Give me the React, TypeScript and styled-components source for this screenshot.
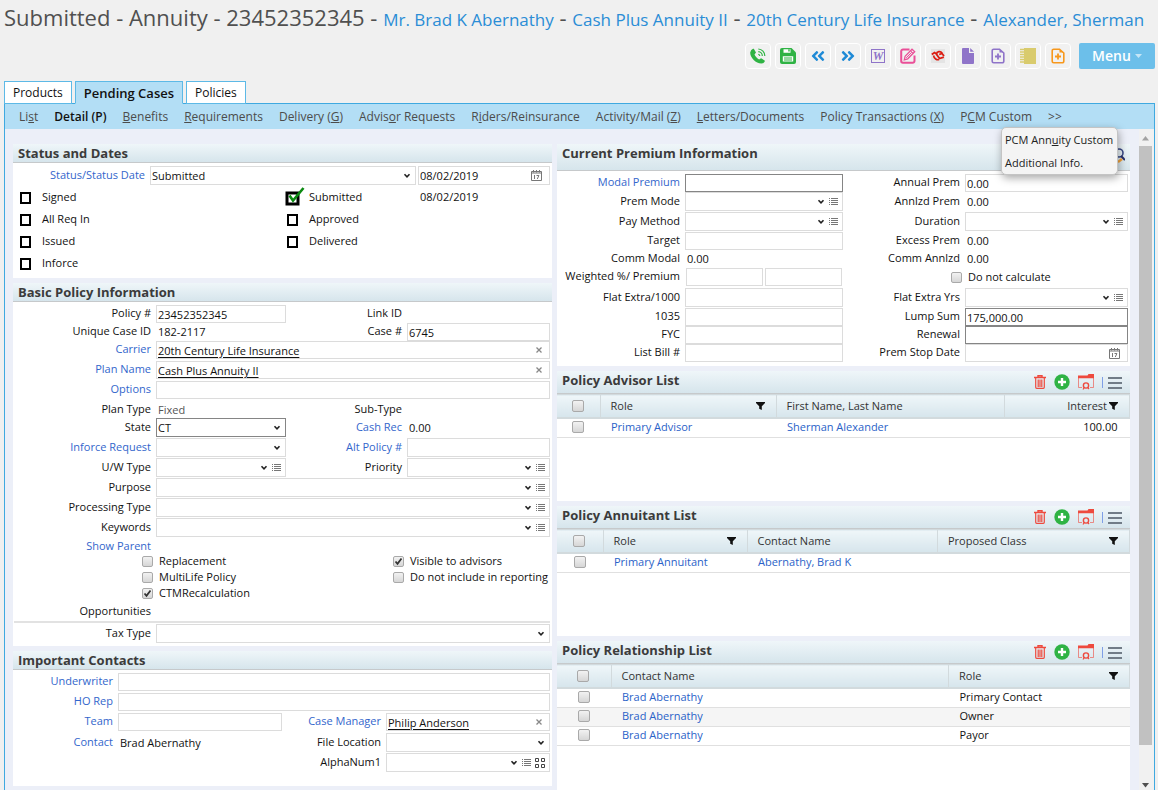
import React, { useId } from "react";
import styled, { createGlobalStyle, css } from "styled-components";
import { FaAngleDoubleLeft, FaAngleDoubleRight } from "react-icons/fa";

const GlobalStyle = createGlobalStyle`
  * { box-sizing: border-box; }
  body {
    margin: 0;
    background: #f0f0f0;
    color: #111;
    font: 11px/16px "Open Sans", "Liberation Sans", sans-serif;
    overflow: hidden;
  }
  input, select, button { font: inherit; color: inherit; margin: 0; }
  a { color: inherit; text-decoration: none; }
`;

/* ---------- page frame ---------- */

const Page = styled.div`
  height: 100vh;
  padding: 0 3px 0 4px;
  display: flex;
  flex-direction: column;
`;

const Title = styled.h1`
  margin: 0;
  height: 36px;
  font-size: 22px;
  line-height: 34px;
  font-weight: 400;
  color: #505050;
  white-space: nowrap;
`;

const TitleLink = styled.a`
  font-size: 17px;
  color: #2a8dd6;
`;

const Toolbar = styled.div`
  display: flex;
  justify-content: flex-end;
  align-items: center;
  gap: 4px;
  height: 40px;
`;

const ToolButton = styled.button<{ $color?: string }>`
  width: 26px;
  height: 26px;
  padding: 0;
  display: flex;
  align-items: center;
  justify-content: center;
  border: 1px solid #fff;
  border-radius: 4px;
  background: #f1f1f1;
  color: ${(p) => p.$color};
`;

const WordGlyph = styled.span`
  width: 14px;
  height: 14px;
  border: 1px solid currentColor;
  font: italic bold 12px/12px "Liberation Serif", serif;
  display: flex;
  justify-content: center;
`;

const MenuButton = styled.button`
  width: 76px;
  height: 26px;
  margin-left: 4px;
  padding: 0;
  display: flex;
  align-items: center;
  justify-content: center;
  gap: 4px;
  border: 0;
  border-radius: 2px;
  background: #6cbfea;
  color: #fff;
  font-size: 14px;
  font-weight: 600;
`;

const Tabs = styled.nav`
  height: 28px;
  display: flex;
  align-items: flex-end;
  gap: 3px;
  position: relative;
  z-index: 1;
  margin-bottom: -1px;
`;

const Tab = styled.a<{ $active?: boolean }>`
  height: 23px;
  padding: 0 8px;
  border: 1px solid #5db9e6;
  background: ${(p) => (p.$active ? "#b3def5" : "#fff")};
  border-bottom-color: ${(p) => (p.$active ? "#b3def5" : "#5db9e6")};
  font-size: ${(p) => (p.$active ? 13 : 12)}px;
  line-height: 22px;
  font-weight: ${(p) => (p.$active ? 600 : 400)};
`;

const Panel = styled.main`
  flex: 1;
  min-height: 0;
  display: flex;
  flex-direction: column;
  border: solid #3fa9e0;
  border-width: 1px 1px 0;
  background: #eceff8;
`;

const SubNav = styled.nav`
  flex: none;
  height: 25px;
  padding-left: 14px;
  display: flex;
  gap: 16px;
  position: relative;
  background: #b3def5;
  color: #4c4c4c;
  font-size: 12px;
  line-height: 26px;
  white-space: nowrap;
`;

const SubLink = styled.a<{ $active?: boolean }>`
  ${(p) => p.$active && css`font-weight: 600; color: #111;`}
`;

const Popup = styled.div`
  position: absolute;
  top: 23px;
  right: 36px;
  z-index: 5;
  width: 117px;
  height: 48px;
  padding: 0 3px;
  display: flex;
  flex-direction: column;
  border: 1px solid #c4c4c4;
  border-radius: 5px;
  background: #f4f4f4;
  color: #222;
  box-shadow: 1px 3px 8px rgba(0, 0, 0, 0.35);
  font-size: 11px;
  line-height: 23px;
`;

const Scroller = styled.div`
  flex: 1;
  min-height: 0;
  display: flex;
  overflow: hidden;
`;

const Columns = styled.div`
  flex: 1;
  min-width: 0;
  padding: 15px 9px 0 8px;
  display: grid;
  grid-template-columns: minmax(0, 539fr) minmax(0, 573fr);
  align-items: start;
  gap: 5px;
`;

const Column = styled.div`
  display: flex;
  flex-direction: column;
  gap: 5px;
`;

const Track = styled.div`
  width: 15px;
  padding: 7px 2px 2px 0;
  display: flex;
  flex-direction: column;
  align-items: center;
  background: #f1f1f1;
`;

const Thumb = styled.div`
  width: 13px;
  flex: 599;
  margin-top: 5px;
  background: #c1c1c1;
`;

const ThumbRest = styled.div`
  flex: 38;
`;

/* ---------- cards ---------- */

const Card = styled.section<{ $min?: number }>`
  background: #fff;
  min-height: ${(p) => p.$min ?? 0}px;
`;

const CardHead = styled.header<{ $h: number }>`
  height: ${(p) => p.$h}px;
  padding: 0 5px;
  display: flex;
  justify-content: space-between;
  border-bottom: 1px solid #c6c9cb;
  background: linear-gradient(#eff6f9, #d6e5ec);
`;

const CardTitle = styled.h2`
  margin: 0;
  font-size: 13px;
  line-height: 18px;
  font-weight: 700;
  color: #3b3b3b;
`;

const HeadTools = styled.div`
  display: flex;
  align-items: center;
  gap: 8px;
  padding-right: 3px;
`;

const IconButton = styled.button`
  padding: 0;
  border: 0;
  background: none;
  display: flex;
  align-items: center;
`;

const ClearButton = styled(IconButton)`
  padding-right: 3px;
`;

const Rows = styled.div<{ $bottom?: number }>`
  padding: 3px 2px ${(p) => p.$bottom ?? 2}px 0;
`;

const Row = styled.div<{ $cols: string; $h?: number }>`
  display: grid;
  grid-template-columns: ${(p) => p.$cols};
  height: ${(p) => p.$h ?? 20}px;
  padding-bottom: 2px;
`;

/* ---------- fields ---------- */

const labelLook = css<{ $blue?: boolean }>`
  align-self: center;
  padding: 0 5px 2px 0;
  text-align: right;
  white-space: nowrap;
  color: ${(p) => (p.$blue ? "#3366cc" : "#111")};
`;
const Label = styled.label<{ $blue?: boolean }>`${labelLook}`;
const Caption = styled.span<{ $blue?: boolean }>`${labelLook}`;

const Box = styled.div<{ $strong?: boolean }>`
  min-width: 0;
  display: flex;
  align-items: center;
  gap: 4px;
  padding-right: 4px;
  border: 1px solid ${(p) => (p.$strong ? "#858585" : "#dcdcdc")};
  background: #fff;
`;

const controlLook = css`
  flex: 1;
  min-width: 0;
  width: 0;
  height: 100%;
  padding: 0 0 0 1px;
  border: 0;
  outline: 0;
  background: none;
  appearance: none;
`;
const TextInput = styled.input<{ $link?: boolean }>`
  ${controlLook}
  text-decoration: ${(p) => (p.$link ? "underline" : "none")};
  text-underline-offset: 2px;
`;
const Select = styled.select`
  ${controlLook}
  padding-top: 1px;
`;

const Value = styled.span<{ $muted?: boolean }>`
  align-self: center;
  padding: 0 0 0 2px;
  color: ${(p) => (p.$muted ? "#555" : "#111")};
`;

const Check = styled.input`
  appearance: none;
  flex: none;
  width: 11px;
  height: 11px;
  margin: 0;
  border: 1px solid #a9a9a9;
  border-radius: 2px;
  background: linear-gradient(#f2f2f2, #d6d6d6);
  &:checked {
    background: url("data:image/svg+xml,%3Csvg xmlns='http://www.w3.org/2000/svg' viewBox='0 0 9 9'%3E%3Cpath d='M1.5 4.5l2 2.3L7.5 1.5' fill='none' stroke='%23333' stroke-width='1.8'/%3E%3C/svg%3E"),
      linear-gradient(#f2f2f2, #d6d6d6);
  }
`;

const CheckLabel = styled.label`
  display: flex;
  align-items: center;
  gap: 6px;
  white-space: nowrap;
`;

const StageGrid = styled.div`
  display: grid;
  grid-template-columns: 267px 131px 1fr;
  grid-auto-rows: 22px;
  align-items: center;
  padding: 0 0 4px 7px;
`;

const Stage = styled.label`
  display: flex;
  align-items: center;
  gap: 11px;
  position: relative;
`;

const StageBox = styled.input`
  appearance: none;
  width: 11px;
  height: 12px;
  margin: 2px 0 0;
  border: 2px solid #000;
  background: #fff;
  &:checked { border-color: transparent; }
`;

const StageTick = styled.svg`
  position: absolute;
  left: -2px;
  top: -3px;
  pointer-events: none;
`;

const CheckGrid = styled.div`
  display: grid;
  grid-template-columns: 251px 1fr;
  grid-auto-rows: 16px;
  padding: 0 0 2px 129px;
`;

const SectionRule = styled.hr`
  height: 2px;
  margin: 0 0 1px 1px;
  border: 0;
  background: #e2e2e2;
`;

/* ---------- tables ---------- */

const Table = styled.table`
  width: 100%;
  table-layout: fixed;
  border-collapse: collapse;
`;

const Th = styled.th<{ $w?: number }>`
  width: ${(p) => (p.$w ? `${p.$w}px` : "auto")};
  height: 23px;
  padding: 0 11px 0 10px;
  border: solid #d2dadd;
  border-width: 1px 1px 2px 0;
  background: linear-gradient(#eff6f9, #d6e5ec);
  color: #333;
  font-weight: 400;
  text-align: left;
`;

const ThInner = styled.div<{ $end?: boolean }>`
  display: flex;
  align-items: center;
  justify-content: ${(p) => (p.$end ? "flex-end" : "space-between")};
  gap: 2px;
`;

const Tr = styled.tr<{ $alt?: boolean }>`
  background: ${(p) => (p.$alt ? "#f5f5f5" : "#fff")};
`;

const Td = styled.td<{ $end?: boolean }>`
  height: 19px;
  padding: 0 12px 2px 11px;
  border-bottom: 1px solid #e0e0e0;
  line-height: 16px;
  text-align: ${(p) => (p.$end ? "right" : "left")};
`;

const TickCell = styled.div`
  display: flex;
  justify-content: center;
`;

const TickBox = styled(Check)`
  width: 12px;
  height: 12px;
`;

const CellLink = styled.a`
  color: #2a62c8;
`;

/* ---------- icons ---------- */

const Chevron = () => (
  <svg width="8" height="6" viewBox="0 0 8 6" fill="none" stroke="#222" strokeWidth="1.6">
    <path d="M1.500 1.300L4 3.800L6.500 1.300" />
  </svg>
);

const ListIcon = () => (
  <svg width="9" height="8" viewBox="0 0 9 8" stroke="#777" shapeRendering="crispEdges">
    <path d="M0 .5h1M2 .5h7M0 2.500h1M2 2.500h7M0 4.500h1M2 4.500h7M0 6.500h1M2 6.500h7" />
  </svg>
);

const GridIcon = () => (
  <svg width="10" height="10" viewBox="0 0 10 10" fill="none" stroke="#444">
    <path d="M.5 .5h3v3h-3zM6.500 .5h3v3h-3zM.5 6.500h3v3h-3zM6.500 6.500h3v3h-3z" />
  </svg>
);

const CalendarIcon = () => (
  <svg width="11" height="11" viewBox="0 0 11 11" fill="none" stroke="#777">
    <path d="M.5 1.500h10v9h-10zM.5 3h10M2.500 0v2.500M5.500 0v2.500M8.500 0v2.500M3.500 5v4M5.500 5.500h2.400L6.300 9" />
  </svg>
);

const ClearIcon = () => (
  <svg width="6" height="6" viewBox="0 0 6 6" stroke="#888" strokeWidth="1.3">
    <path d="M.5 .5l5 5M5.500 .5l-5 5" />
  </svg>
);

const Funnel = () => (
  <svg width="9" height="8" viewBox="0 0 9 8" fill="#111">
    <path d="M0 0h9v1L5.800 4.200V8L3.200 6.800V4.200L0 1z" />
  </svg>
);

const PhoneIcon = () => (
  <svg width="18" height="18" viewBox="0 0 18 18">
    <path
      d="M2 3.400C2.800 2.400 3.800 1.800 4.800 1.800L7 5.600 5.500 7.500c1 2.200 2.400 3.700 4.600 5l2-1.300 3.800 2.500c-.2 1.500-1.700 2.800-3.600 2.800C6.800 16.500 1 10.500 1.200 5.500z"
      fill="#2fb344"
    />
    <path
      d="M9.300 7.300a1.800 1.800 0 0 1 1.500 1.600M9.300 4.700a4.200 4.200 0 0 1 4 4.200M9.300 2a6.800 6.800 0 0 1 6.500 6.900"
      fill="none" stroke="#2fb344" strokeWidth="1.2"
    />
  </svg>
);

const SaveIcon = () => (
  <svg width="16" height="16" viewBox="0 0 16 16">
    <path d="M2 0h9.500L16 4.500V14a2 2 0 0 1-2 2H2a2 2 0 0 1-2-2V2a2 2 0 0 1 2-2z" fill="#2fb344" />
    <path d="M3.500 1.200h7v3.600h-7zM2.800 8.200h10.400v5.400H2.800z" fill="#fff" />
    <path d="M8.300 1.200h1.400v2.400H8.300zM4 9.500h8v1H4zM4 11.500h8v1H4z" fill="#2fb344" />
  </svg>
);

const EditIcon = () => (
  <svg width="16" height="16" viewBox="0 0 16 16" fill="none" stroke="#ea4f98">
    <path d="M9.500 1.500H3A1.800 1.800 0 0 0 1.200 3.300V13A1.800 1.800 0 0 0 3 14.800h9.700a1.800 1.800 0 0 0 1.800-1.800V7.500" strokeWidth="2" />
    <path d="M4.300 11.800l.8-3.600L12 1.200l2.700 2.600-7 7z" strokeWidth="1.3" />
    <path d="M6.200 9.800l5.600-5.600M10.500 2.700l2.700 2.600" />
  </svg>
);

const AcrobatIcon = () => (
  <svg width="14" height="14" viewBox="0 0 14 14" fill="none" stroke="#dc1b10">
    <rect width="14" height="14" fill="#e4e4e4" stroke="none" />
    <path d="M.8 5.500L3.500 3.500 5.500 5C5.800 2.500 9.500 1.500 11 4.200" strokeWidth="1.8" />
    <path d="M2.500 6.500C3 9.500 6 11.500 8 10.500" strokeWidth="1.6" />
    <path d="M5.500 5.200L8.500 9.500 12.800 8.200M8.200 5.500L11 4.500 13 7" strokeWidth="1.8" />
  </svg>
);

const FileIcon = () => (
  <svg width="12" height="16" viewBox="0 0 12 16" fill="#8f74c9">
    <path d="M1 0h6v5h5V15a1 1 0 0 1-1 1H1a1 1 0 0 1-1-1V1a1 1 0 0 1 1-1z" />
    <path d="M8.200 0L12 3.800H8.200z" />
  </svg>
);

const FilePlusIcon = () => (
  <svg width="14" height="16" viewBox="0 0 14 16" fill="none" stroke="currentColor">
    <path d="M3 1.200h5.500L12.800 5v8.300A1.500 1.500 0 0 1 11.300 14.800H2.700a1.500 1.500 0 0 1-1.500-1.500V2.700A1.500 1.500 0 0 1 2.700 1.200z" strokeWidth="1.6" />
    <path d="M7 5.500v6M4 8.500h6" strokeWidth="1.8" />
    <path d="M8.500 1.200V4.500h4z" fill="currentColor" stroke="none" />
  </svg>
);

const NotebookIcon = () => (
  <svg width="16" height="16" viewBox="0 0 16 16">
    <path d="M4 0h12v16H4z" fill="#d9cb6d" />
    <path d="M0 1.500h4M0 4h4M0 6.500h4M0 9h4M0 11.500h4M0 14h4" stroke="#d9cb6d" strokeWidth="1.3" />
  </svg>
);

const TrashIcon = () => (
  <svg width="12" height="14" viewBox="0 0 12 14" fill="none" stroke="#ee4a3e">
    <path d="M0 2.500h12M4 2V.7h4V2" strokeWidth="1.4" />
    <path d="M1.700 3v9.300a1 1 0 0 0 1 1h6.600a1 1 0 0 0 1-1V3M4.200 4.500v7.500M6 4.500v7.500M7.800 4.500v7.500" strokeWidth="1.2" />
  </svg>
);

const AddIcon = () => (
  <svg width="16" height="16" viewBox="0 0 16 16">
    <circle cx="8" cy="8" r="7.700" fill="#2fb344" />
    <path d="M8 4v8M4 8h8" stroke="#fff" strokeWidth="2.4" />
  </svg>
);

const FolderIcon = () => (
  <svg width="16" height="16" viewBox="0 0 16 16" fill="none" stroke="#ee4a3e">
    <path d="M0 1.500h9.500l1-1.500H16V4.200H0z" fill="#ee4a3e" stroke="none" />
    <path d="M.5 4v9.500H4M15.500 4v9.500H12" opacity=".6" />
    <circle cx="8" cy="11.500" r="2.600" strokeWidth="1.4" />
    <path d="M6.300 13.500L5 15.500M9.700 13.500L11 15" strokeWidth="1.2" />
  </svg>
);

const MenuIcon = () => (
  <svg width="20" height="14" viewBox="0 0 20 14" shapeRendering="crispEdges">
    <path d="M.5 2v11" stroke="#7f9fe6" />
    <path d="M6 3h14M6 8h14M6 13h14" stroke="#717c87" strokeWidth="2" />
  </svg>
);

const SearchIcon = () => (
  <svg width="13" height="20" viewBox="0 0 13 20" fill="none">
    <circle cx="7" cy="6" r="4" stroke="#3a4a86" strokeWidth="1.6" />
    <path d="M9 9l4 4" stroke="#28306a" strokeWidth="2.2" />
    <path d="M6 15l4-3" stroke="#f2a33a" strokeWidth="2.4" />
  </svg>
);

const Arrow = ({ down }: { down?: boolean }) => (
  <svg width="7" height="5" viewBox="0 0 7 5" fill={down ? "#505050" : "#a3a3a3"}>
    <path d={down ? "M0 0h7L3.5 4.5z" : "M0 4.5h7L3.5 0z"} />
  </svg>
);

/* ---------- composed parts ---------- */

type Kind = "text" | "select" | "list" | "grid" | "lookup" | "date" | "value" | "muted";

interface FieldProps {
  label: string;
  blue?: boolean;
  kind?: Kind;
  value?: string;
  strong?: boolean;
}

const Control = ({ id, name, kind = "text", value = "", strong }: { id?: string; name?: string } & Partial<FieldProps>) => {
  const picks = kind === "select" || kind === "list" || kind === "grid";
  return (
    <Box $strong={strong}>
      {picks ? (
        <Select id={id} aria-label={name} defaultValue={value}>
          <option>{value}</option>
        </Select>
      ) : (
        <TextInput id={id} aria-label={name} defaultValue={value} $link={kind === "lookup"} />
      )}
      {picks && <Chevron />}
      {(kind === "list" || kind === "grid") && (
        <IconButton aria-label="Show list"><ListIcon /></IconButton>
      )}
      {kind === "grid" && <IconButton aria-label="Show grid"><GridIcon /></IconButton>}
      {kind === "lookup" && <ClearButton aria-label="Clear"><ClearIcon /></ClearButton>}
      {kind === "date" && <ClearButton aria-label="Pick a date"><CalendarIcon /></ClearButton>}
    </Box>
  );
};

const Field = ({ label, blue, kind = "text", value = "", strong }: FieldProps) => {
  const id = useId();
  if (kind === "value" || kind === "muted") {
    return (
      <>
        <Caption $blue={blue}>{label}</Caption>
        <Value $muted={kind === "muted"}>{value}</Value>
      </>
    );
  }
  return (
    <>
      <Label htmlFor={id} $blue={blue}>{label}</Label>
      <Control id={id} kind={kind} value={value} strong={strong} />
    </>
  );
};

const Tick = ({ label, on }: { label: string; on?: boolean }) => (
  <CheckLabel>
    <Check type="checkbox" defaultChecked={on} />
    {label}
  </CheckLabel>
);

const StageItem = ({ label, on }: { label: string; on?: boolean }) => (
  <Stage>
    <StageBox type="checkbox" defaultChecked={on} />
    {on && (
      <StageTick width="21" height="20" viewBox="0 0 21 20" fill="none">
        <path d="M2 7h11v11H2z" stroke="#000" strokeWidth="3" />
        <path d="M4.500 9.500l3.500 5L18.500 2" stroke="#0c8a12" strokeWidth="2.600" />
      </StageTick>
    )}
    {label}
  </Stage>
);

const CardTop = ({ title }: { title: string }) => (
  <CardHead $h={19}><CardTitle>{title}</CardTitle></CardHead>
);

interface Col { name: string; w?: number; filter?: boolean; end?: boolean }

const ListCard = ({ title, tick, cols, rows, min }: {
  title: string; tick: number; cols: Col[]; rows: { text: string; link?: boolean }[][]; min: number;
}) => (
  <Card $min={min}>
    <CardHead $h={23}>
      <CardTitle>{title}</CardTitle>
      <HeadTools>
        <IconButton aria-label="Delete"><TrashIcon /></IconButton>
        <IconButton aria-label="Add"><AddIcon /></IconButton>
        <IconButton aria-label="Open"><FolderIcon /></IconButton>
        <IconButton aria-label="List menu"><MenuIcon /></IconButton>
      </HeadTools>
    </CardHead>
    <Table>
      <thead>
        <tr>
          <Th $w={tick}><TickCell><TickBox type="checkbox" aria-label="Select all" /></TickCell></Th>
          {cols.map((c) => (
            <Th key={c.name} $w={c.w}>
              <ThInner $end={c.end}>{c.name}{c.filter && <Funnel />}</ThInner>
            </Th>
          ))}
        </tr>
      </thead>
      <tbody>
        {rows.map((r, i) => (
          <Tr key={i} $alt={i % 2 === 1}>
            <Td><TickCell><TickBox type="checkbox" aria-label={`Select row ${i + 1}`} /></TickCell></Td>
            {r.map((c, j) => (
              <Td key={j} $end={cols[j].end}>
                {c.link ? <CellLink href="#">{c.text}</CellLink> : c.text}
              </Td>
            ))}
          </Tr>
        ))}
      </tbody>
    </Table>
  </Card>
);

const Pair = styled.div`
  display: grid;
  grid-template-columns: 1fr 1fr;
  gap: 2px;
  padding: 0 1px;
`;

const links: [string, string, string][] = [
  ["Li", "s", "t"],
  ["Detail (P)", "", ""],
  ["", "B", "enefits"],
  ["", "R", "equirements"],
  ["Delivery (", "G", ")"],
  ["Advis", "o", "r Requests"],
  ["R", "i", "ders/Reinsurance"],
  ["Activity/Mail (", "Z", ")"],
  ["", "L", "etters/Documents"],
  ["Policy Transactions (", "X", ")"],
  ["P", "C", "M Custom"],
  [">>", "", ""],
];

const BASIC = "143px 130px 121px minmax(0, 1fr)";
const WIDE = "143px minmax(0, 1fr)";
const CONTACT = "105px 164px 104px minmax(0, 1fr)";
const CONTACT_WIDE = "105px minmax(0, 1fr)";
const PREMIUM = "128px 158px 122px minmax(0, 1fr)";

export default function App() {
  return (
    <Page>
      <GlobalStyle />
      <Title>
        Submitted - Annuity - 23452352345 - <TitleLink href="#">Mr. Brad K Abernathy</TitleLink> -{" "}
        <TitleLink href="#">Cash Plus Annuity II</TitleLink> -{" "}
        <TitleLink href="#">20th Century Life Insurance</TitleLink> -{" "}
        <TitleLink href="#">Alexander, Sherman</TitleLink>
      </Title>
      <Toolbar>
        <ToolButton aria-label="Call"><PhoneIcon /></ToolButton>
        <ToolButton aria-label="Save"><SaveIcon /></ToolButton>
        <ToolButton aria-label="Previous" $color="#1f8ad6"><FaAngleDoubleLeft size={16} /></ToolButton>
        <ToolButton aria-label="Next" $color="#1f8ad6"><FaAngleDoubleRight size={16} /></ToolButton>
        <ToolButton aria-label="Word" $color="#8f74c9"><WordGlyph>W</WordGlyph></ToolButton>
        <ToolButton aria-label="Edit"><EditIcon /></ToolButton>
        <ToolButton aria-label="PDF"><AcrobatIcon /></ToolButton>
        <ToolButton aria-label="File"><FileIcon /></ToolButton>
        <ToolButton aria-label="Add file" $color="#8f74c9"><FilePlusIcon /></ToolButton>
        <ToolButton aria-label="Notes"><NotebookIcon /></ToolButton>
        <ToolButton aria-label="Add form" $color="#f7981d"><FilePlusIcon /></ToolButton>
        <MenuButton>
          Menu
          <svg width="7" height="4" viewBox="0 0 7 4" fill="#c5e6f7"><path d="M0 0h7L3.500 4z" /></svg>
        </MenuButton>
      </Toolbar>
      <Tabs>
        <Tab href="#">Products</Tab>
        <Tab href="#" $active>Pending Cases</Tab>
        <Tab href="#">Policies</Tab>
      </Tabs>
      <Panel>
        <SubNav>
          {links.map(([a, key, b], i) => (
            <SubLink key={i} href="#" $active={i === 1}>{a}<u>{key}</u>{b}</SubLink>
          ))}
          <Popup>
            <a href="#">PCM Ann<u>u</u>ity Custom</a>
            <a href="#">Additional Info.</a>
          </Popup>
        </SubNav>
        <Scroller>
          <Columns>
            <Column>
              <Card>
                <CardTop title="Status and Dates" />
                <Rows $bottom={0}>
                  <Row $cols="137px minmax(0, 266fr) 2px minmax(0, 132fr)">
                    <Field label="Status/Status Date" blue kind="select" value="Submitted" />
                    <span />
                    <Control name="Status date" kind="date" value="08/02/2019" />
                  </Row>
                </Rows>
                <StageGrid>
                  <StageItem label="Signed" />
                  <StageItem label="Submitted" on />
                  <Value>08/02/2019</Value>
                  <StageItem label="All Req In" />
                  <StageItem label="Approved" />
                  <span />
                  <StageItem label="Issued" />
                  <StageItem label="Delivered" />
                  <span />
                  <StageItem label="Inforce" />
                </StageGrid>
              </Card>

              <Card>
                <CardTop title="Basic Policy Information" />
                <Rows>
                  <Row $cols={BASIC} $h={18}>
                    <Field label="Policy #" value="23452352345" />
                    <Field label="Link ID" kind="value" />
                  </Row>
                  <Row $cols={BASIC} $h={18}>
                    <Field label="Unique Case ID" kind="value" value="182-2117" />
                    <Field label="Case #" value="6745" />
                  </Row>
                  <Row $cols={WIDE}><Field label="Carrier" blue kind="lookup" value="20th Century Life Insurance" /></Row>
                  <Row $cols={WIDE}><Field label="Plan Name" blue kind="lookup" value="Cash Plus Annuity II" /></Row>
                  <Row $cols={WIDE}><Field label="Options" blue /></Row>
                  <Row $cols={BASIC} $h={17}>
                    <Field label="Plan Type" kind="muted" value="Fixed" />
                    <Field label="Sub-Type" kind="value" />
                  </Row>
                  <Row $cols={BASIC}>
                    <Field label="State" kind="select" value="CT" strong />
                    <Field label="Cash Rec" blue kind="value" value="0.00" />
                  </Row>
                  <Row $cols={BASIC}>
                    <Field label="Inforce Request" blue kind="select" />
                    <Field label="Alt Policy #" blue />
                  </Row>
                  <Row $cols={BASIC}>
                    <Field label="U/W Type" kind="list" />
                    <Field label="Priority" kind="list" />
                  </Row>
                  <Row $cols={WIDE}><Field label="Purpose" kind="list" /></Row>
                  <Row $cols={WIDE}><Field label="Processing Type" kind="list" /></Row>
                  <Row $cols={WIDE}><Field label="Keywords" kind="list" /></Row>
                  <Row $cols={WIDE} $h={15}><Field label="Show Parent" blue kind="value" /></Row>
                  <CheckGrid>
                    <Tick label="Replacement" />
                    <Tick label="Visible to advisors" on />
                    <Tick label="MultiLife Policy" />
                    <Tick label="Do not include in reporting" />
                    <Tick label="CTMRecalculation" on />
                  </CheckGrid>
                  <Row $cols={WIDE} $h={18}><Field label="Opportunities" kind="value" /></Row>
                  <SectionRule />
                  <Row $cols={WIDE}><Field label="Tax Type" kind="select" /></Row>
                </Rows>
              </Card>

              <Card>
                <CardTop title="Important Contacts" />
                <Rows $bottom={13}>
                  <Row $cols={CONTACT_WIDE}><Field label="Underwriter" blue /></Row>
                  <Row $cols={CONTACT_WIDE}><Field label="HO Rep" blue /></Row>
                  <Row $cols={CONTACT}>
                    <Field label="Team" blue />
                    <Field label="Case Manager" blue kind="lookup" value="Philip Anderson" />
                  </Row>
                  <Row $cols={CONTACT}>
                    <Field label="Contact" blue kind="value" value="Brad Abernathy" />
                    <Field label="File Location" kind="select" />
                  </Row>
                  <Row $cols={CONTACT}>
                    <span />
                    <span />
                    <Field label="AlphaNum1" kind="grid" />
                  </Row>
                </Rows>
              </Card>
            </Column>

            <Column>
              <Card>
                <CardHead $h={27}>
                  <CardTitle>Current Premium Information</CardTitle>
                  <IconButton aria-label="Search"><SearchIcon /></IconButton>
                </CardHead>
                <Rows>
                  <Row $cols={PREMIUM} $h={18}>
                    <Field label="Modal Premium" blue strong />
                    <Field label="Annual Prem" value="0.00" />
                  </Row>
                  <Row $cols={PREMIUM}>
                    <Field label="Prem Mode" kind="list" />
                    <Field label="Annlzd Prem" kind="value" value="0.00" />
                  </Row>
                  <Row $cols={PREMIUM}>
                    <Field label="Pay Method" kind="list" />
                    <Field label="Duration" kind="list" />
                  </Row>
                  <Row $cols={PREMIUM} $h={18}>
                    <Field label="Target" />
                    <Field label="Excess Prem" kind="value" value="0.00" />
                  </Row>
                  <Row $cols={PREMIUM} $h={18}>
                    <Field label="Comm Modal" kind="value" value="0.00" />
                    <Field label="Comm Annlzd" kind="value" value="0.00" />
                  </Row>
                  <Row $cols="128px 158px 108px minmax(0, 1fr)">
                    <Caption>Weighted %/ Premium</Caption>
                    <Pair>
                      <Control name="Weighted percent" />
                      <Control name="Weighted premium" />
                    </Pair>
                    <span />
                    <Tick label="Do not calculate" />
                  </Row>
                  <Row $cols={PREMIUM}>
                    <Field label="Flat Extra/1000" />
                    <Field label="Flat Extra Yrs" kind="list" />
                  </Row>
                  <Row $cols={PREMIUM} $h={18}>
                    <Field label="1035" />
                    <Field label="Lump Sum" value="175,000.00" strong />
                  </Row>
                  <Row $cols={PREMIUM} $h={18}>
                    <Field label="FYC" />
                    <Field label="Renewal" strong />
                  </Row>
                  <Row $cols={PREMIUM}>
                    <Field label="List Bill #" />
                    <Field label="Prem Stop Date" kind="date" />
                  </Row>
                </Rows>
              </Card>

              <ListCard
                title="Policy Advisor List"
                tick={43}
                min={130}
                cols={[
                  { name: "Role", w: 176, filter: true },
                  { name: "First Name, Last Name" },
                  { name: "Interest", w: 125, filter: true, end: true },
                ]}
                rows={[[{ text: "Primary Advisor", link: true }, { text: "Sherman Alexander", link: true }, { text: "100.00" }]]}
              />
              <ListCard
                title="Policy Annuitant List"
                tick={46}
                min={130}
                cols={[
                  { name: "Role", w: 144, filter: true },
                  { name: "Contact Name" },
                  { name: "Proposed Class", w: 192, filter: true },
                ]}
                rows={[[{ text: "Primary Annuitant", link: true }, { text: "Abernathy, Brad K", link: true }, { text: "" }]]}
              />
              <ListCard
                title="Policy Relationship List"
                tick={54}
                min={160}
                cols={[{ name: "Contact Name" }, { name: "Role", w: 181, filter: true }]}
                rows={[
                  [{ text: "Brad Abernathy", link: true }, { text: "Primary Contact" }],
                  [{ text: "Brad Abernathy", link: true }, { text: "Owner" }],
                  [{ text: "Brad Abernathy", link: true }, { text: "Payor" }],
                ]}
              />
            </Column>
          </Columns>
          <Track>
            <Arrow />
            <Thumb />
            <ThumbRest />
            <Arrow down />
          </Track>
        </Scroller>
      </Panel>
    </Page>
  );
}
